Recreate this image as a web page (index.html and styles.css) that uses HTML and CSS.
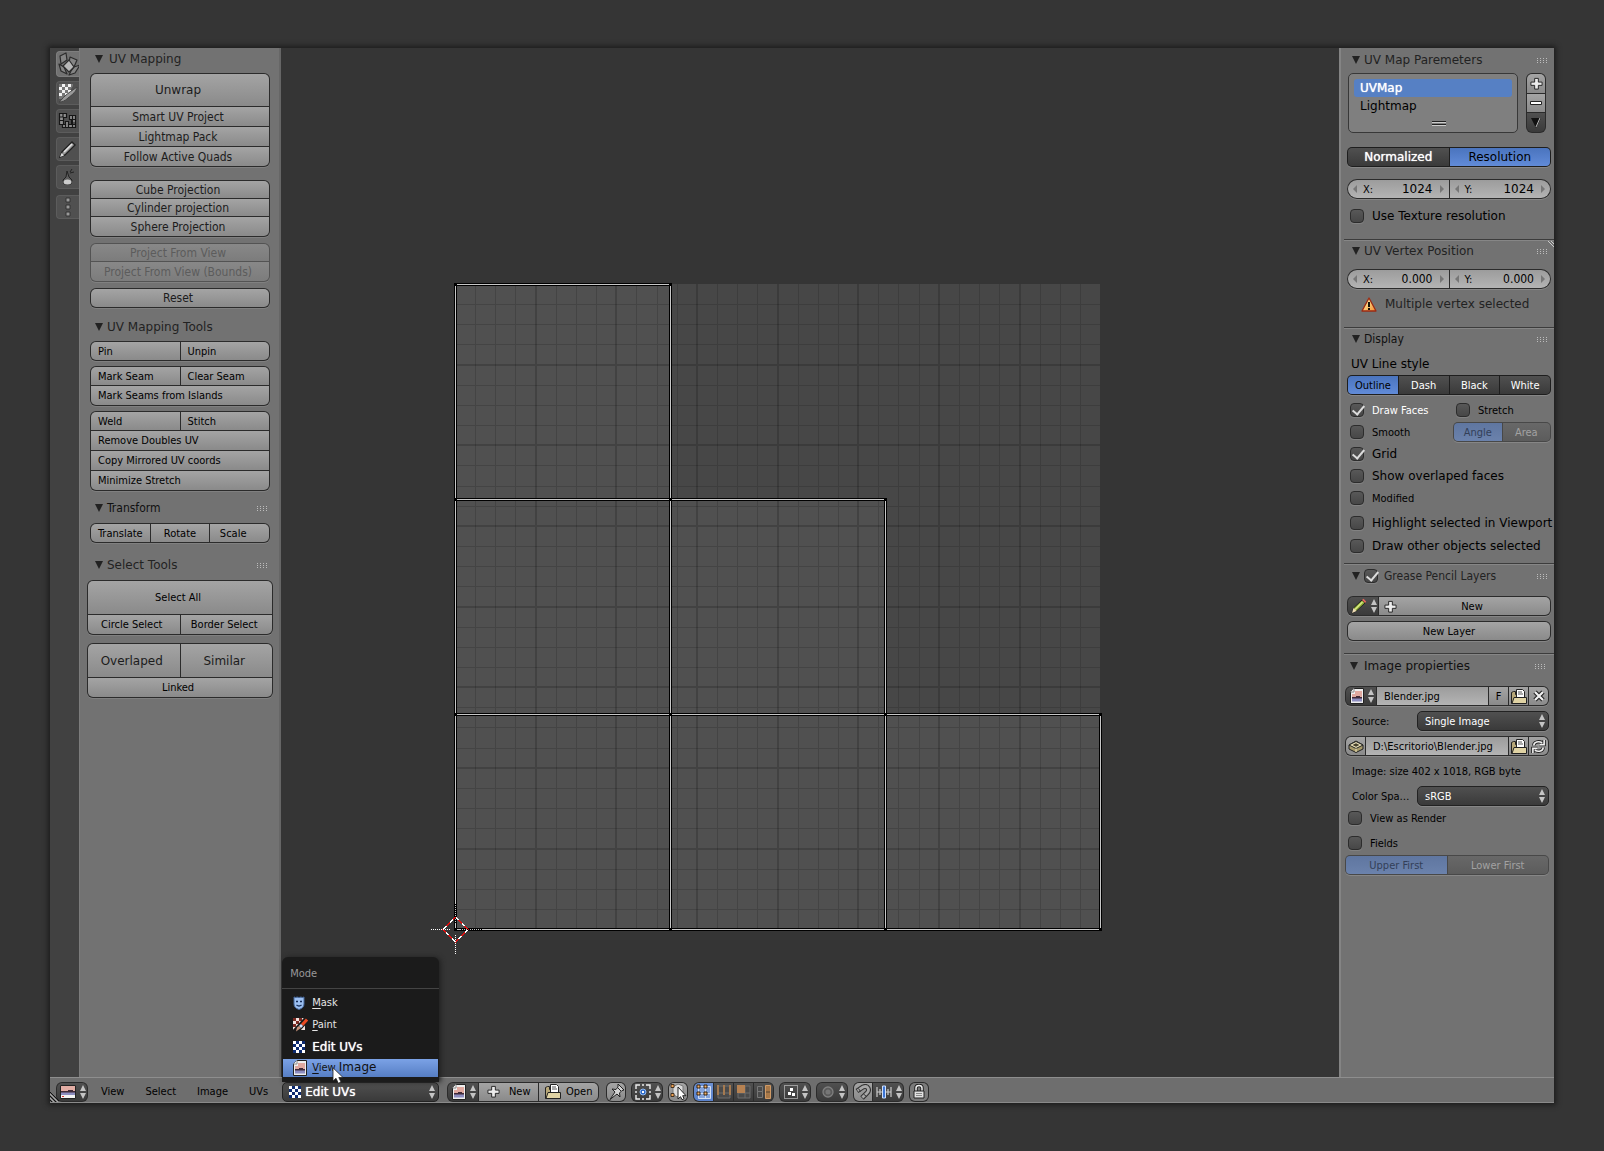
FILE: index.html
```html
<!DOCTYPE html>
<html lang="en">
<head>
<meta charset="utf-8">
<title>UV Editor</title>
<link rel="stylesheet" href="styles.css">
</head>
<body>
<svg class="defs" aria-hidden="true">
  <symbol id="i-updown" viewBox="0 0 6 14"><path d="M3 0L6 6H0zM3 14L0 8h6z" fill="#c4c4c4"/></symbol>
  <symbol id="i-plus" viewBox="0 0 14 14"><path d="M5 1.500h4v4h4v3.500h-4v4h-4v-4h-4v-3.500h4z" fill="#ececec" stroke="#222" stroke-width="1"/></symbol>
  <symbol id="i-minus" viewBox="0 0 14 14"><path d="M1.500 5.500h11v3h-11z" fill="#fff" stroke="#222"/></symbol>
  <symbol id="i-image" viewBox="0 0 14 16"><path d="M4 .5h9.500v15H.5V4z" fill="#eee" stroke="#222"/><path d="M4 .5V4H.5" fill="#fff" stroke="#888"/><path d="M5 3h7v6H2V6h3z" fill="#e0a9a0"/><path d="M2 10h10v3.500H2z" fill="#8d8dc0"/><path d="M2 9h10v1.500H2zM6 8h4v1H6z" fill="#402a38"/></symbol>
  <symbol id="i-editor" viewBox="0 0 16 14"><path d="M.5.5h15v13H.5z" fill="#f4f4f4" stroke="#222"/><path d="M1 1h14v5H1z" fill="#e2ada4"/><path d="M1 7h14v3H1z" fill="#8d8dc0"/><path d="M1 6h14v1.500H1zM8 5h5v1H8z" fill="#402a38"/><path d="M2 11.500h2" stroke="#d33"/></symbol>
  <symbol id="i-folder" viewBox="0 0 16 15"><path d="M.5 14.500v-11l2-1h2v3h9v9z" fill="#b8a878" stroke="#222"/><path d="M5.500.5h6l2 2v6h-8z" fill="#fff" stroke="#222"/><path d="M7 3h4M7 5h5" stroke="#555"/><path d="M1 14.500l2-6h12.500v6z" fill="#e0d3a4" stroke="#222"/></symbol>
  <symbol id="i-x" viewBox="0 0 12 12"><path d="M2 2l8 8M10 2l-8 8" stroke="#222" stroke-width="4.500"/><path d="M2 2l8 8M10 2l-8 8" stroke="#f2f2f2" stroke-width="2.200"/></symbol>
  <symbol id="i-refresh" viewBox="0 0 16 16"><path d="M3 7C3 3 8 2 12 4M14 1v5H9M13 9c0 4-5 5-9 3M2 15v-5h5" fill="none" stroke="#222" stroke-width="3.600"/><path d="M3 7C3 3 8 2 12 4M14 1v5H9M13 9c0 4-5 5-9 3M2 15v-5h5" fill="none" stroke="#f2f2f2" stroke-width="1.700"/></symbol>
  <symbol id="i-pack" viewBox="0 0 16 14"><path d="M1 6l7-4 7 4v4l-7 3.500L1 10z" fill="#a79a6a" stroke="#222"/><path d="M1 6l7 3.500L15 6 8 2.500z" fill="#efe5bd" stroke="#222"/><path d="M4.500 6L8 4.200 11.500 6 8 7.800z" fill="#443f2c"/><path d="M8 9.500V13" stroke="#efe5bd"/></symbol>
  <symbol id="i-checker" viewBox="0 0 12 12"><g shape-rendering="crispEdges"><path d="M0 0h12v12H0z" fill="#fff"/><path d="M3 0h3v3H3zM9 0h3v3H9zM0 3h3v3H0zM6 3h3v3H6zM3 6h3v3H3zM9 6h3v3H9zM0 9h3v3H0zM6 9h3v3H6z" fill="#0c2a70"/></g></symbol>
  <symbol id="i-arrow" viewBox="0 0 12 17"><path d="M1 .8V14l3-2.700 2.300 5 2.700-1.200L6.800 10.500H11z" fill="#fff" stroke="#222" stroke-width=".8"/></symbol>
</svg>

<main class="window">
  <nav class="tabs" aria-label="Tool tabs">
    <button class="tab active" aria-label="Unwrap"><svg width="24" height="24" viewBox="0 0 24 24"><g fill="#858585" stroke="#2c2c2c" stroke-width="1.200" stroke-linejoin="round"><path d="M3 4l6-3 1 7-6 4zM13 5l7 3-3 7-5-4zM2 12l5 3 3 7-6-3zM17 15l6-2-5 8-6 2 2-4z"/><path d="M6 14l6-6 5 7-5 5z" fill="#b8b8b8"/></g></svg></button>
    <button class="tab" aria-label="Texture paint"><svg width="20" height="20" viewBox="0 0 20 20"><path d="M1 1h14v2L6 16H1z" fill="#777"/><path d="M4 1h3v3H4zM10 1h3v3h-3zM1 4h3v3H1zM7 4h3v3H7zM4 7h3v3H4zM10 7h3v3h-3zM1 10h3v3H1zM7 10h3v3H7z" fill="#f2f2f2"/><path d="M19 4c0 4-5 8-9 11-3 3-6 4-9 4 3-2 3-4 6-6 3-3 8-6 12-9z" fill="#9a9a9a" stroke="#444"/></svg></button>
    <button class="tab" aria-label="Pack islands"><svg width="20" height="18" viewBox="0 0 20 18"><g fill="#8e8e8e" stroke="#161616" stroke-width="1.200"><path d="M1.500 1.500h7v4h-3v7h-4zM11.500 3.500h6v12h-13v-3h3v-3h3v3h3v-5h-2z"/><path d="M5 1.500v4M1.500 5h4M1.500 8.500h4M14.500 3.500v12M11.500 7.500h6M13.500 11h4M7.500 12.500v3M10.500 12.500v3M13.500 12.500h4" fill="none"/></g></svg></button>
    <button class="tab" aria-label="Draw"><svg width="18" height="18" viewBox="0 0 18 18"><path d="M1 17l2-5L13 2l3 3L6 15z" fill="#999" stroke="#222" stroke-width="1.400"/><path d="M5 12l8-8" stroke="#e4e4e4" stroke-width="1.600"/><path d="M1 17l1.500-4L5 15.500z" fill="#ddd"/></svg></button>
    <button class="tab" aria-label="Sculpt"><svg width="14" height="18" viewBox="0 0 14 18"><path d="M6 3l2 6 3 3-1 4H3l-1-4 3-3z" fill="#5c5c5c" stroke="#222"/><ellipse cx="6.500" cy="14" rx="4" ry="2.500" fill="#ccc"/><path d="M9 4l2-3M9 5l4-1" stroke="#222"/></svg></button>
    <button class="tab last" aria-label="More"><svg width="6" height="20" viewBox="0 0 6 20"><path d="M1 1h4v4H1zM1 8h4v4H1zM1 15h4v4H1z" fill="#999" stroke="#333"/></svg></button>
  </nav>

  <aside class="tools">
    <section>
      <h2 class="head">UV Mapping</h2>
      <div class="group soft">
        <div class="row big"><button>Unwrap</button></div>
        <div class="row mid"><button>Smart UV Project</button></div>
        <div class="row mid"><button>Lightmap Pack</button></div>
        <div class="row mid"><button>Follow Active Quads</button></div>
      </div>
      <div class="group soft apart">
        <div class="row slim mid"><button>Cube Projection</button></div>
        <div class="row slim mid"><button>Cylinder projection</button></div>
        <div class="row mid"><button>Sphere Projection</button></div>
      </div>
      <div class="group off">
        <div class="row slim mid"><button disabled>Project From View</button></div>
        <div class="row mid"><button disabled>Project From View (Bounds)</button></div>
      </div>
      <div class="group soft"><div class="row mid"><button>Reset</button></div></div>
    </section>
    <section class="left">
      <h2 class="head tight">UV Mapping Tools</h2>
      <div class="group"><div class="row"><button>Pin</button><button>Unpin</button></div></div>
      <div class="group">
        <div class="row"><button>Mark Seam</button><button>Clear Seam</button></div>
        <div class="row"><button>Mark Seams from Islands</button></div>
      </div>
      <div class="group">
        <div class="row"><button>Weld</button><button>Stitch</button></div>
        <div class="row"><button>Remove Doubles UV</button></div>
        <div class="row"><button>Copy Mirrored UV coords</button></div>
        <div class="row"><button>Minimize Stretch</button></div>
      </div>
    </section>
    <section class="transform">
      <h2 class="head tight narrow dark">Transform<i class="grip"></i></h2>
      <div class="group"><div class="row"><button>Translate</button><button>Rotate</button><button class="scale">Scale</button></div></div>
    </section>
    <section class="select-tools">
      <h2 class="head tight">Select Tools<i class="grip"></i></h2>
      <div class="group wide">
        <div class="row big small-text"><button>Select All</button></div>
        <div class="row"><button>Circle Select</button><button>Border Select</button></div>
      </div>
      <div class="group wide lower">
        <div class="row big soft"><button>Overlaped</button><button>Similar</button></div>
        <div class="row"><button>Linked</button></div>
      </div>
    </section>
  </aside>

  <div class="canvas">
    <svg class="uv" width="646" height="646" viewBox="0 0 646 646">
      <path d="M0 0h645v646H0z" fill="#474747"/>
      <path d="M0 0h215v215h215v215h215v216H0z" fill="#505050"/>
      <path class="minor" d="M20.500 0v646M40.500 0v646M60.500 0v646M101.500 0v646M121.500 0v646M141.500 0v646M181.500 0v646M202.500 0v646M222.500 0v646M262.500 0v646M282.500 0v646M302.500 0v646M343.500 0v646M363.500 0v646M383.500 0v646M423.500 0v646M443.500 0v646M464.500 0v646M504.500 0v646M524.500 0v646M544.500 0v646M585.500 0v646M605.500 0v646M625.500 0v646M0 20.500h645M0 40.500h645M0 60.500h645M0 101.500h645M0 121.500h645M0 141.500h645M0 181.500h645M0 202.500h645M0 222.500h645M0 262.500h645M0 282.500h645M0 302.500h645M0 343.500h645M0 363.500h645M0 383.500h645M0 423.500h645M0 443.500h645M0 464.500h645M0 504.500h645M0 524.500h645M0 544.500h645M0 585.500h645M0 605.500h645M0 625.500h645"/>
      <path class="major" d="M81 0v646M161 0v646M242 0v646M323 0v646M403 0v646M484 0v646M565 0v646M0 81h645M0 161h645M0 242h645M0 323h645M0 403h645M0 484h645M0 565h645"/>
      <g fill="none">
        <path d="M.5 .5h215v645M.5 .5v645h645v-215H.5M.5 215.500h430v430" stroke="#000" stroke-width="3"/>
        <path d="M.5 .5h215v645M.5 .5v645h645v-215H.5M.5 215.500h430v430" stroke="#c8c8c8"/>
      </g>
      <path d="M-1-1h3v3h-3zM214-1h3v3h-3zM-1 214h3v3h-3zM214 214h3v3h-3zM429 214h3v3h-3zM-1 429h3v3h-3zM214 429h3v3h-3zM429 429h3v3h-3zM644 429h3v3h-3zM-1 644h3v3h-3zM214 644h3v3h-3zM429 644h3v3h-3zM644 644h3v3h-3z"/>
      <g fill="none" stroke-width="1">
        <path d="M.5 633L13 645.500.5 658-12 645.500z" stroke="#fff"/>
        <path d="M.5 633L13 645.500.5 658-12 645.500z" stroke="#e01010" stroke-dasharray="5 4" stroke-dashoffset="-4"/>
        <path d="M-24 645.500h20M.5 651v20" stroke="#fff" stroke-dasharray="1 1"/>
        <path d="M6 645.500h21M.5 620v20" stroke="#000" stroke-dasharray="1 1"/>
      </g>
    </svg>
  </div>

  <aside class="props">
    <section>
      <h2 class="head tight">UV Map Paremeters<i class="grip"></i></h2>
      <div class="maps">
        <div class="list">
          <button class="item on">UVMap</button>
          <button class="item">Lightmap</button>
          <i class="handle"></i>
        </div>
        <div class="side">
          <button aria-label="Add"><svg width="13" height="13"><use href="#i-plus"/></svg></button>
          <button aria-label="Remove"><svg width="14" height="14"><use href="#i-minus"/></svg></button>
          <button class="dk" aria-label="Specials"><svg width="10" height="11" viewBox="0 0 10 11"><path d="M0 1h10L5 11z" fill="#111"/><path d="M9 1L5 10" stroke="#bbb"/></svg></button>
        </div>
      </div>
      <div class="toggle f12 units"><button class="strong">Normalized</button><button class="on">Resolution</button></div>
      <div class="pair f12">
        <label><span>X:</span><input value="1024"></label>
        <label><span>Y:</span><input value="1024"></label>
      </div>
      <label class="check f12"><input type="checkbox">Use Texture resolution</label>
    </section>
    <section class="compact">
      <svg class="corner" width="6" height="6"><path d="M0 0l6 6M3 0l3 3" stroke="#ccc"/></svg>
      <h2 class="head tight">UV Vertex Position<i class="grip"></i></h2>
      <div class="pair c12">
        <label><span>X:</span><input value="0.000"></label>
        <label><span>Y:</span><input value="0.000"></label>
      </div>
      <p class="warn"><svg width="16" height="15" viewBox="0 0 16 15"><defs><linearGradient id="w" x2="1" y2="1"><stop offset=".2" stop-color="#fff0a0"/><stop offset="1" stop-color="#f48a2c"/></linearGradient></defs><path d="M8 1l7 13H1z" fill="url(#w)" stroke="#9c2a12" stroke-width="1.300" stroke-linejoin="round"/><path d="M8 5v5M8 11v2" stroke="#000" stroke-width="1.800"/></svg>Multiple vertex selected</p>
    </section>
    <section class="compact">
      <h2 class="head tight narrow dark">Display<i class="grip"></i></h2>
      <p class="caption">UV Line style</p>
      <div class="toggle line"><button class="on">Outline</button><button>Dash</button><button>Black</button><button>White</button></div>
      <div class="checks">
        <div class="split"><label class="check lit"><input type="checkbox" checked>Draw Faces</label><label class="check second"><input type="checkbox">Stretch</label></div>
        <div class="split"><label class="check"><input type="checkbox">Smooth</label><div class="toggle off second-toggle"><button class="on" disabled>Angle</button><button disabled>Area</button></div></div>
        <label class="check f12"><input type="checkbox" checked>Grid</label>
        <label class="check f12"><input type="checkbox">Show overlaped faces</label>
        <label class="check"><input type="checkbox">Modified</label>
        <label class="check f12 gap"><input type="checkbox">Highlight selected in Viewport</label>
        <label class="check f12"><input type="checkbox">Draw other objects selected</label>
      </div>
    </section>
    <section>
      <h2 class="head narrow with-check"><input type="checkbox" checked aria-label="Enable grease pencil">Grease Pencil Layers<i class="grip"></i></h2>
      <div class="bar">
        <button class="dk pick" aria-label="Browse pencil"><svg width="16" height="16" viewBox="0 0 16 16"><path d="M1 15l1.500-5L11 2l3 3-8.500 8z" fill="#8fae35" stroke="#222"/><path d="M4 11.500l7.500-7.500" stroke="#dcea8c" stroke-width="1.300"/><path d="M11 2l1.500-1.200L15.200 3.500 14 5z" fill="#e2675c"/><path d="M1 15l1.500-5 3 3z" fill="#f0dcb8"/></svg><svg width="6" height="14"><use href="#i-updown"/></svg></button>
        <button class="grow plus"><svg width="13" height="13"><use href="#i-plus"/></svg><span>New</span></button>
      </div>
      <div class="bar"><button class="grow">New Layer</button></div>
    </section>
    <section class="image">
      <h2 class="head dark">Image propierties<i class="grip"></i></h2>
      <div class="bar">
        <button class="dk pick" aria-label="Browse image"><svg width="14" height="16"><use href="#i-image"/></svg><svg width="6" height="14"><use href="#i-updown"/></svg></button>
        <input class="grow" value="Blender.jpg" aria-label="Image name">
        <button class="sq">F</button>
        <button class="sq" aria-label="Open image"><svg width="16" height="15"><use href="#i-folder"/></svg></button>
        <button class="sq" aria-label="Unlink"><svg width="12" height="12"><use href="#i-x"/></svg></button>
      </div>
      <div class="field"><label for="src">Source:</label><span class="drop"><select id="src"><option>Single Image</option></select><svg width="6" height="14"><use href="#i-updown"/></svg></span></div>
      <div class="bar">
        <button class="sq" aria-label="Pack"><svg width="16" height="14"><use href="#i-pack"/></svg></button>
        <input class="grow" value="D:\Escritorio\Blender.jpg" aria-label="File path">
        <button class="sq" aria-label="Choose file"><svg width="16" height="15"><use href="#i-folder"/></svg></button>
        <button class="sq" aria-label="Reload"><svg width="15" height="15"><use href="#i-refresh"/></svg></button>
      </div>
      <p class="info">Image: size 402 x 1018, RGB byte</p>
      <div class="field color"><label for="cs">Color Spa…</label><span class="drop"><select id="cs"><option>sRGB</option></select><svg width="6" height="14"><use href="#i-updown"/></svg></span></div>
      <label class="check"><input type="checkbox">View as Render</label>
      <label class="check gap"><input type="checkbox">Fields</label>
      <div class="toggle off"><button class="on" disabled>Upper First</button><button disabled>Lower First</button></div>
    </section>
  </aside>

  <footer class="header-bar">
    <svg class="hatch" width="9" height="10"><path d="M0 0l9 9M0 4l6 6M0 8l2 2" stroke="#111"/><path d="M0 2l8 8M0 6l4 4" stroke="#aaa"/></svg>
    <div class="bar"><button class="dk pick" aria-label="Editor type"><svg width="16" height="14"><use href="#i-editor"/></svg><svg width="6" height="14"><use href="#i-updown"/></svg></button></div>
    <div class="menus"><button>View</button><button>Select</button><button>Image</button><button>UVs</button></div>
    <div class="mode">
      <div class="popup" role="menu">
        <p>Mode</p>
        <button role="menuitem"><svg width="12" height="14" viewBox="0 0 12 14"><path d="M1 1q2 1 3 0 2 1 4 0 1 1 3 0v7q0 4-5 5.500Q1 12 1 8z" fill="#9cc0f2" stroke="#46689c"/><path d="M3 5.500h2M7 5.500h2M3.500 9q2.500 2 5 0" fill="none" stroke="#152c58" stroke-width="1.300"/></svg><span><u>M</u>ask</span></button>
        <button role="menuitem"><svg width="15" height="14" viewBox="0 0 15 14"><path d="M0 0h12v12H0z" fill="#f1e3e0"/><path d="M0 0h3v3H0zM6 0h3v3H6zM3 3h3v3H3zM0 6h3v3H0zM6 6h3v3H6z" fill="#7a2a22"/><path d="M14 1L2 14" stroke="#1b1b1b" stroke-width="6"/><path d="M14 1.500L9 7" stroke="#ea4a22" stroke-width="3"/><path d="M9 7L7 9" stroke="#cfe0ff" stroke-width="3"/><path d="M6 8l2 2-5 3.500 1-4z" fill="#c9947c"/></svg><span><u>P</u>aint</span></button>
        <button role="menuitem" class="current"><svg width="12" height="12"><use href="#i-checker"/></svg><span>Edit UVs</span></button>
        <button role="menuitem" class="hover"><svg width="14" height="16"><use href="#i-image"/></svg><span><u>V</u>iew <b>Image</b></span></button>
        <svg class="pointer" width="12" height="17"><use href="#i-arrow"/></svg>
      </div>
      <span class="drop"><svg class="lead" width="12" height="12"><use href="#i-checker"/></svg><select aria-label="Mode"><option>Edit UVs</option></select><svg width="6" height="14"><use href="#i-updown"/></svg></span>
    </div>
    <div class="bar open">
      <button class="dk pick" aria-label="Browse image"><svg width="14" height="16"><use href="#i-image"/></svg><svg width="6" height="14"><use href="#i-updown"/></svg></button>
      <button class="txt"><svg width="13" height="13"><use href="#i-plus"/></svg>New</button>
      <button class="txt"><svg width="16" height="15"><use href="#i-folder"/></svg>Open</button>
    </div>
    <div class="bar"><button class="sq" aria-label="Pin"><svg width="17" height="17" viewBox="0 0 17 17"><path d="M10 1l6 6-2 .5-2.500 2.500.5 4-3-3-7 5.500L7 9 4 6l4 .5L10 4z" fill="#d5d5d5" stroke="#222"/><path d="M10 5l3 3" stroke="#222"/></svg></button></div>
    <div class="bar"><button class="dk pick" aria-label="Pivot"><svg width="16" height="16" viewBox="0 0 16 16"><path d="M1 5V1h4M11 1h4v4M15 11v4h-4M5 15H1v-4M7 1h2M7 15h2M1 7v2M15 7v2" fill="none" stroke="#eee" stroke-width="1.400"/><circle cx="8" cy="8" r="3" fill="#2f6bc8" stroke="#8fb8f0"/><path d="M7 7h2v2H7z" fill="#fff"/></svg><svg width="6" height="14"><use href="#i-updown"/></svg></button></div>
    <div class="bar"><button class="sq" aria-label="Sync selection"><svg width="18" height="17" viewBox="0 0 18 17"><path d="M4 4l5-3 5 2v9l-6 2-4-3z" fill="#dcdcdc" stroke="#777"/><path d="M2 1.500h3v3H2zM2 10.500h3v3H2z" fill="#f2a350" stroke="#432"/><path d="M9 4v12l2.500-2.300 1.500 3 2-1-1.300-3H17z" fill="#fff" stroke="#222"/></svg></button></div>
    <div class="bar modes">
      <button class="sq blue" aria-label="Vertex"><svg width="16" height="16" viewBox="0 0 16 16"><path d="M2.500 2.500h12v12h-12zM9.500 2.500v12M2.500 9.500h12" fill="#86a4dc" stroke="#d5dff2"/><path d="M1 1h3v3H1zM8 1h3v3H8zM1 8h3v3H1zM8 8h3v3H8z" fill="#f5b06a" stroke="#321"/></svg></button>
      <button class="sq dk" aria-label="Edge"><svg width="16" height="16" viewBox="0 0 16 16"><path d="M2 2h12v12H2zM2 9h12" fill="#4a4a4a" stroke="#6c6c6c"/><path d="M2 1v10M8 1v10M14 1v10" stroke="#a57a50" stroke-width="2"/></svg></button>
      <button class="sq dk" aria-label="Face"><svg width="16" height="16" viewBox="0 0 16 16"><path d="M2 2h12v12H2zM9 2v12M2 9h12" fill="#4a4a4a" stroke="#6c6c6c"/><path d="M1 1h8v8H1z" fill="#b78252"/></svg></button>
      <button class="sq dk" aria-label="Island"><svg width="16" height="16" viewBox="0 0 16 16"><path d="M1.500 2.500h5v5h-5zM1.500 7.500h5v6h-5z" fill="#4a4a4a" stroke="#777"/><path d="M9.500 1.500h5v13h-5z" fill="#a87848" stroke="#cf9a66"/><path d="M10 8h4" stroke="#543"/></svg></button>
    </div>
    <div class="bar"><button class="dk pick" aria-label="Sticky selection"><svg width="14" height="14" viewBox="0 0 14 14"><path d="M.5.5h13v13H.5z" fill="none" stroke="#eee" stroke-dasharray="1 1"/><path d="M6 3h3v3H6zM4 7h3v3H4zM8 8h3v3H8z" fill="#fff"/></svg><svg width="6" height="14"><use href="#i-updown"/></svg></button></div>
    <div class="bar"><button class="dk pick" aria-label="Proportional edit"><svg width="14" height="14" viewBox="0 0 14 14"><circle cx="7" cy="7" r="5" fill="#5b5b5b" stroke="#808080" stroke-width="1.300"/><circle cx="7" cy="7" r="2.500" fill="#777"/></svg><svg width="6" height="14"><use href="#i-updown"/></svg></button></div>
    <div class="bar">
      <button class="sq" aria-label="Snap"><svg width="16" height="16" viewBox="0 0 16 16"><g fill="none"><path d="M2 7l6-4c5-2 7 3 4 6l-5 5" stroke="#333" stroke-width="5"/><path d="M2.600 6.600L8 3c5-2 7 3 4 6l-4.600 4.600" stroke="#a8a8a8" stroke-width="2.800"/><path d="M3.500 4.500l2 3M8.500 10l3 2.500" stroke="#333"/></g></svg></button>
      <button class="dk pick" aria-label="Snap element"><svg width="16" height="14" viewBox="0 0 16 14"><path d="M1 2v10M4 4v6M12 4v6M15 2v10M1 7h14" stroke="#ccc" stroke-width="1.200"/><path d="M6.500 1h3v12h-3z" fill="#3b74d4" stroke="#cfe0fa"/></svg><svg width="6" height="14"><use href="#i-updown"/></svg></button>
    </div>
    <div class="bar"><button class="sq grey" aria-label="Lock"><svg width="12" height="15" viewBox="0 0 12 15"><path d="M3 7V4q0-2.500 3-2.500T9 4v3" fill="none" stroke="#222" stroke-width="3.500"/><path d="M3 7V4q0-2.500 3-2.500T9 4v3" fill="none" stroke="#eee" stroke-width="1.500"/><path d="M1 7h10v7H1z" fill="#e2e2e2" stroke="#222"/><path d="M3 9.500h6M3 11.500h6" stroke="#888"/></svg></button></div>
  </footer>
</main>
</body>
</html>
```
FILE: styles.css
```css
:root {
  --line: #2b2b2b;
  --regular: "DejaVu Sans", sans-serif;
  --narrow: "DejaVu Sans Condensed", "DejaVu Sans", sans-serif;
  --light: linear-gradient(#a4a4a4, #8a8a8a);
  --dark: linear-gradient(#505050, #3a3a3a);
  --blue: linear-gradient(#4a74be, #618bd8);
}

* { box-sizing: border-box; }

body {
  margin: 0;
  min-height: 100vh;
  padding: 48px 50px;
  display: flex;
  background: #353535;
  color: #000;
  font: 11px/15px var(--narrow);
}

h2, p { margin: 0; font: inherit; }
svg { display: block; flex: none; }
.defs { position: absolute; width: 0; height: 0; }

button, input, select {
  margin: 0;
  padding: 0;
  border: 0;
  min-width: 0;
  font: inherit;
  color: inherit;
  background: none;
  border-radius: 0;
  appearance: none;
}

.window {
  flex: 1;
  display: grid;
  grid-template: 1fr 26px / 29px 202px 1fr 215px;
  box-shadow: 0 0 5px 2px #1c1c1c;
}

/* Tab strip */
.tabs {
  background: #414141;
  padding: 3px 0 0 6px;
  display: flex;
  flex-direction: column;
  gap: 4px;
}
.tab {
  height: 24px;
  display: grid;
  place-items: center;
  background: #505050;
  border: 1px solid #5c5c5c;
  border-right: 0;
  border-radius: 4px 0 0 4px;
}
.tab.active { height: 26px; background: #727272; border-color: #7e7e7e; }
.tab.last { margin-top: 2px; }

/* Panel headings */
.head {
  height: 22px;
  display: flex;
  align-items: center;
  gap: 6px;
  color: #222;
  font: 12px/22px var(--regular);
}
.head::before {
  content: "";
  border: 4px solid transparent;
  border-top: 8px solid #222;
  border-bottom: 0;
}
.head.tight { gap: 4px; }
.head.narrow { font-family: var(--narrow); }
.head.dark { color: #101010; }
.grip {
  width: 11px;
  height: 5px;
  margin-left: auto;
  background: repeating-linear-gradient(90deg, #bdbdbd 0 1px, transparent 1px 3px);
  -webkit-mask: repeating-linear-gradient(#000 0 1px, transparent 1px 2px);
  mask: repeating-linear-gradient(#000 0 1px, transparent 1px 2px);
}

/* Left tools */
.tools {
  background: #727272;
  border-left: 1px solid #7c7c7c;
  border-right: 2px solid #666;
  padding: 0 9px 0 10px;
}
.tools section + section { margin-top: 8px; }
.tools .head { margin-bottom: 3px; padding: 0 2px 0 5px; }
.group {
  display: flex;
  flex-direction: column;
  gap: 1px;
  padding: 1px;
  background: var(--line);
  border-radius: 6px;
  overflow: hidden;
  box-shadow: 0 1px 0 #808080;
}
.group + .group { margin-top: 5px; }
.group.soft + .group, .group.off + .group { margin-top: 6px; }
.group.soft + .group.apart { margin-top: 13px; }
.row { display: grid; grid-auto-flow: column; grid-auto-columns: minmax(0, 1fr); gap: 1px; height: 19px; }
.row:only-child { height: 18px; }
.row.slim { height: 17px; }
.row.big { height: 33px; font: 12px var(--regular); }
.row.big:first-child { height: 32px; }
.wide .row.big:first-child { height: 33px; }
.row.big.small-text { font: 11px var(--narrow); }
.row.mid { font: 12px var(--narrow); }
.row button { padding-right: 4px; background: var(--light); white-space: nowrap; }
.group > .row:first-child > :first-child { border-top-left-radius: 5px; }
.group > .row:first-child > :last-child { border-top-right-radius: 5px; }
.group > .row:last-child > :first-child { border-bottom-left-radius: 5px; }
.group > .row:last-child > :last-child { border-bottom-right-radius: 5px; }
.soft { color: #1c1c1c; }
.group.off { background: #535353; color: #5c5c5c; }
.off .row button { background: linear-gradient(#888, #7c7c7c); }
.left .row:first-child { height: 18px; }
.left .row button { text-align: left; padding-left: 7px; }
.transform .row button { padding-right: 0; }
.transform .row .scale { padding-right: 13px; }
.tools section.transform { margin-top: 6px; }
.transform .head { margin-bottom: 4px; }
.tools section.select-tools { margin-top: 11px; }
.select-tools .head { margin-bottom: 4px; }
.group.wide { margin: 0 -3px; }
.group.wide.lower { margin-top: 8px; }

/* Canvas */
.canvas { background: #353535; overflow: hidden; padding: 236px 0 0 174px; }
.uv { overflow: visible; shape-rendering: crispEdges; }
.minor { stroke: #000; stroke-opacity: .14; fill: none; }
.major { stroke: #000; stroke-opacity: .17; stroke-width: 2; fill: none; }

/* Right properties */
.props {
  background: #727272;
  border-left: 2px solid #848484;
  padding: 1px 0 0 3px;
}
.props section { position: relative; padding: 0 3px 12px 3px; }
.props section + section { border-top: 1px solid #3c3c3c; padding-top: 1px; box-shadow: inset 0 1px 0 #868686; }
.props section.compact { padding-top: 0; }
.props .head { padding: 0 3px 0 5px; }
.corner { position: absolute; right: 0; top: 1px; }

.maps { display: flex; gap: 8px; padding: 2px 5px 0 1px; }
.list {
  flex: 1;
  height: 60px;
  padding: 5px;
  background: #7f7f7f;
  border: 1px solid #383838;
  border-radius: 5px;
  font: 12px/18px var(--regular);
}
.item { display: block; width: 100%; height: 18px; padding-left: 6px; text-align: left; border-radius: 3px; }
.item.on { background: #5680c4; color: #fff; text-shadow: 0 0 1px #fff; }
.handle { display: block; width: 14px; height: 4px; margin: 6px 66px 0 auto; border: solid #222; border-width: 1px 0; box-shadow: 0 1px 0 #ccc, inset 0 1px 0 #ccc; }
.side {
  width: 20px;
  display: grid;
  grid-template-rows: 1fr 1fr 1fr;
  gap: 1px;
  padding: 1px;
  background: var(--line);
  border-radius: 6px;
  overflow: hidden;
}
.side button { display: grid; place-items: center; background: var(--light); }
.side button:first-child { border-radius: 5px 5px 0 0; }
.side button:last-child { border-radius: 0 0 5px 5px; }
.side .dk, .bar .dk { background: var(--dark); }

.toggle {
  display: flex;
  gap: 1px;
  height: 20px;
  padding: 1px;
  background: #1e1e1e;
  border-radius: 5px;
  box-shadow: 0 1px 0 #868686;
  color: #fff;
}
.toggle button { flex: 1; background: var(--dark); }
.toggle button:first-child { border-radius: 4px 0 0 4px; }
.toggle button:last-child { border-radius: 0 4px 4px 0; }
.toggle .on { background: var(--blue); color: #000; }
.toggle .strong { text-shadow: 0 0 1px #fff; }
.toggle.off { background: #484848; color: #a2a2a2; }
.toggle.off button { background: linear-gradient(#686868, #5c5c5c); }
.toggle.off .on { background: linear-gradient(#5f76a0, #6b82ac); color: #333f58; }
.f12 { font: 12px/18px var(--regular); }
.c12 { font: 12px/18px var(--narrow); }
.toggle.units { margin-top: 14px; }

.pair {
  display: flex;
  gap: 1px;
  height: 20px;
  margin-top: 12px;
  padding: 1px;
  background: var(--line);
  border-radius: 10px;
  box-shadow: 0 1px 0 #868686;
}
.pair.c12 { margin-top: 7px; }
.pair label {
  flex: 1;
  min-width: 0;
  display: flex;
  align-items: center;
  padding: 0 5px;
  background: linear-gradient(#9c9c9c, #b4b4b4);
}
.pair label:first-child { border-radius: 9px 0 0 9px; }
.pair label:last-child { border-radius: 0 9px 9px 0; }
.pair label::before, .pair label::after { content: ""; border: 4px solid transparent; }
.pair label::before { border-right: 4px solid #777; border-left: 0; }
.pair label::after { border-left: 4px solid #777; border-right: 0; }
.pair span { margin-left: 6px; font: 11px var(--narrow); }
.pair input { flex: 1; text-align: right; margin-right: 7px; width: 0; }

.check { display: flex; align-items: center; gap: 8px; height: 22px; padding-left: 3px; white-space: nowrap; }
.check.f12 { line-height: 22px; }
.pair + .check { margin-top: 6px; }
.check.lit { color: #fff; }
.check.gap { margin-top: 3px; margin-bottom: 1px; }
input[type="checkbox"] {
  flex: none;
  width: 14px;
  height: 14px;
  border: 1px solid #2c2c2c;
  border-radius: 4px;
  background: linear-gradient(#585858, #474747);
  box-shadow: 0 1px 0 #828282;
  position: relative;
}
input[type="checkbox"]:checked::after {
  content: "";
  position: absolute;
  left: 4px;
  top: -1px;
  width: 5px;
  height: 10px;
  border: solid #dcdcdc;
  border-width: 0 2px 2px 0;
  transform: rotate(40deg);
}

.warn, .caption { height: 22px; font: 12px/22px var(--regular); display: flex; align-items: center; }
.warn { gap: 8px; margin-top: 4px; padding-left: 14px; color: #222; }
.caption { padding-left: 4px; margin-top: 3px; }
.checks { margin-top: 4px; margin-bottom: -6px; }
.split { display: flex; justify-content: space-between; align-items: center; }
.check.second { width: 98px; }
.second-toggle { width: 98px; }

.bar {
  display: flex;
  gap: 1px;
  height: 20px;
  padding: 1px;
  background: var(--line);
  border-radius: 6px;
  box-shadow: 0 1px 0 #868686;
}
.bar > * { display: flex; align-items: center; justify-content: center; background: var(--light); }
.bar > :first-child { border-top-left-radius: 5px; border-bottom-left-radius: 5px; }
.bar > :last-child { border-top-right-radius: 5px; border-bottom-right-radius: 5px; }
.bar .pick { width: 30px; gap: 4px; padding-left: 1px; }
.bar .sq { width: 19px; }
.grow { flex: 1; }
.bar input { background: linear-gradient(#9c9c9c, #b4b4b4); padding-left: 7px; width: 0; }
.plus { padding-left: 5px; }
.plus span { flex: 1; padding-right: 3px; }
.props .head + .bar { margin-top: 9px; }
.props .bar + .bar { margin-top: 5px; }
.head.with-check::before { margin-right: -2px; }

.props .image { padding: 1px 5px 0 1px; }
.field { display: flex; align-items: center; margin: 5px 0; padding-left: 7px; }
.field label { flex: 1; }
.field.color { margin: 3px 0 1px; }
.info { height: 22px; line-height: 22px; margin-top: 5px; padding-left: 7px; }
.drop {
  display: flex;
  align-items: center;
  width: 132px;
  height: 20px;
  padding-right: 3px;
  background: var(--dark);
  border: 1px solid #222;
  border-radius: 5px;
  box-shadow: 0 1px 0 #868686;
  color: #fff;
}
.drop select { flex: 1; padding-left: 7px; height: 18px; }

/* Bottom bar */
.header-bar {
  grid-column: 1 / -1;
  position: relative;
  display: flex;
  align-items: center;
  gap: 5px;
  padding: 3px 6px 0;
  background: #6e6e6e;
  border-top: 1px solid #8e8e8e;
  border-bottom: 1px solid #8a8a8a;
}
.header-bar .bar, .header-bar .drop { box-shadow: none; }
.header-bar .sq { width: 18px; }
.header-bar .modes .sq { width: 19px; }
.hatch { position: absolute; left: 0; bottom: 0; }
.menus { display: flex; gap: 21px; margin: 0 9px 0 8px; }
.mode { position: relative; width: 157px; }
.mode .drop { width: 100%; padding-left: 6px; font: 12px var(--regular); text-shadow: 0 0 1px #fff; }
.mode select { padding-left: 4px; text-shadow: inherit; }
.header-bar .open { margin-left: 3px; margin-right: 2px; }
.bar .txt { width: 59px; gap: 9px; }
.bar .txt:last-child { gap: 5px; }
.bar .blue { background: linear-gradient(#6c90d2, #5a82cc); }
.bar .grey { background: #7a7a7a; }
.popup {
  position: absolute;
  left: 0;
  bottom: 100%;
  width: 157px;
  padding: 6px 1px 5px;
  background: #1b1b1b;
  border-radius: 6px 6px 0 0;
  box-shadow: 2px 0 5px #222;
  color: #e6e6e6;
}
.popup p { height: 26px; padding-left: 8px; line-height: 22px; color: #999; border-bottom: 1px solid #444; margin: 0 -1px 3px; }
.popup button { display: flex; align-items: center; width: 100%; height: 22px; text-align: left; padding-left: 10px; }
.popup button svg { margin-right: auto; }
.popup button span { width: 126px; }
.popup .current { font: 12px var(--regular); color: #fff; text-shadow: 0 0 1px #fff; }
.popup .hover { height: 18px; margin-top: 1px; background: linear-gradient(#7ba2e6, #567ec4); color: #111; }
.popup u { text-underline-offset: 2px; }
.popup b { font: 12px var(--regular); }
.popup .pointer { position: absolute; left: 50px; bottom: -2px; }
```
